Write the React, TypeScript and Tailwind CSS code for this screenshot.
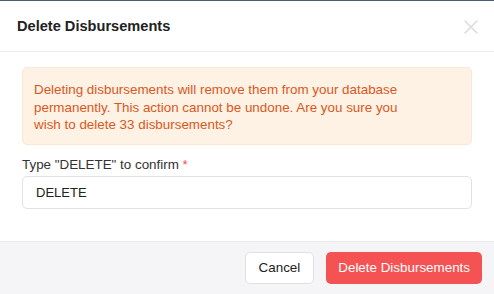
import { X } from 'lucide-react';

export default function App() {
  return (
    <div className="w-[494px] h-[294px] bg-white flex flex-col overflow-hidden font-['Liberation_Sans',Arial,sans-serif]">
      <div className="h-px bg-[#4b5b70] shrink-0" />
      {/* Header */}
      <div className="h-[51px] flex items-center justify-between pl-[17px] pr-[11px] pt-[2px] border-b border-[#ececec] shrink-0">
        <h2 className="text-[14.6px] font-bold text-[#222]">Delete Disbursements</h2>
        <X size={24} strokeWidth={1.6} className="text-[#dcdcdc]" />
      </div>

      {/* Body */}
      <div className="flex-1 px-[22px] pt-[15px]">
        <div className="bg-[#fef2e5] border border-[#fbe7d3] rounded-[5px] pl-[11px] pr-3 pt-[13px] pb-[10px] text-[13.4px] leading-[17.5px] text-[#d9581d]">
          <p className="max-w-[375px]">
            Deleting disbursements will remove them from your database permanently. This action cannot be undone. Are you sure you wish to delete 33 disbursements?
          </p>
        </div>

        <label className="block mt-[11px] text-[13.4px] leading-[18px] text-[#333]">
          Type "DELETE" to confirm <span className="text-[#f05252]">*</span>
        </label>
        <input
          readOnly
          value="DELETE"
          className="mt-[2px] w-full h-[33px] px-[13px] text-[13px] text-[#222] border border-[#e2e2e2] rounded-[5px] outline-none"
        />
      </div>

      {/* Footer */}
      <div className="h-[53px] bg-[#f5f5f7] border-t border-[#ececec] flex items-center justify-end gap-[12px] pr-[12px] shrink-0">
        <button className="h-[32px] px-[13px] bg-white border border-[#e0e0e0] rounded-[5px] text-[13.4px] text-[#222]">
          Cancel
        </button>
        <button className="h-[32px] px-[12px] bg-[#f55353] rounded-[5px] text-[13.4px] text-white">
          Delete Disbursements
        </button>
      </div>
    </div>
  );
}
